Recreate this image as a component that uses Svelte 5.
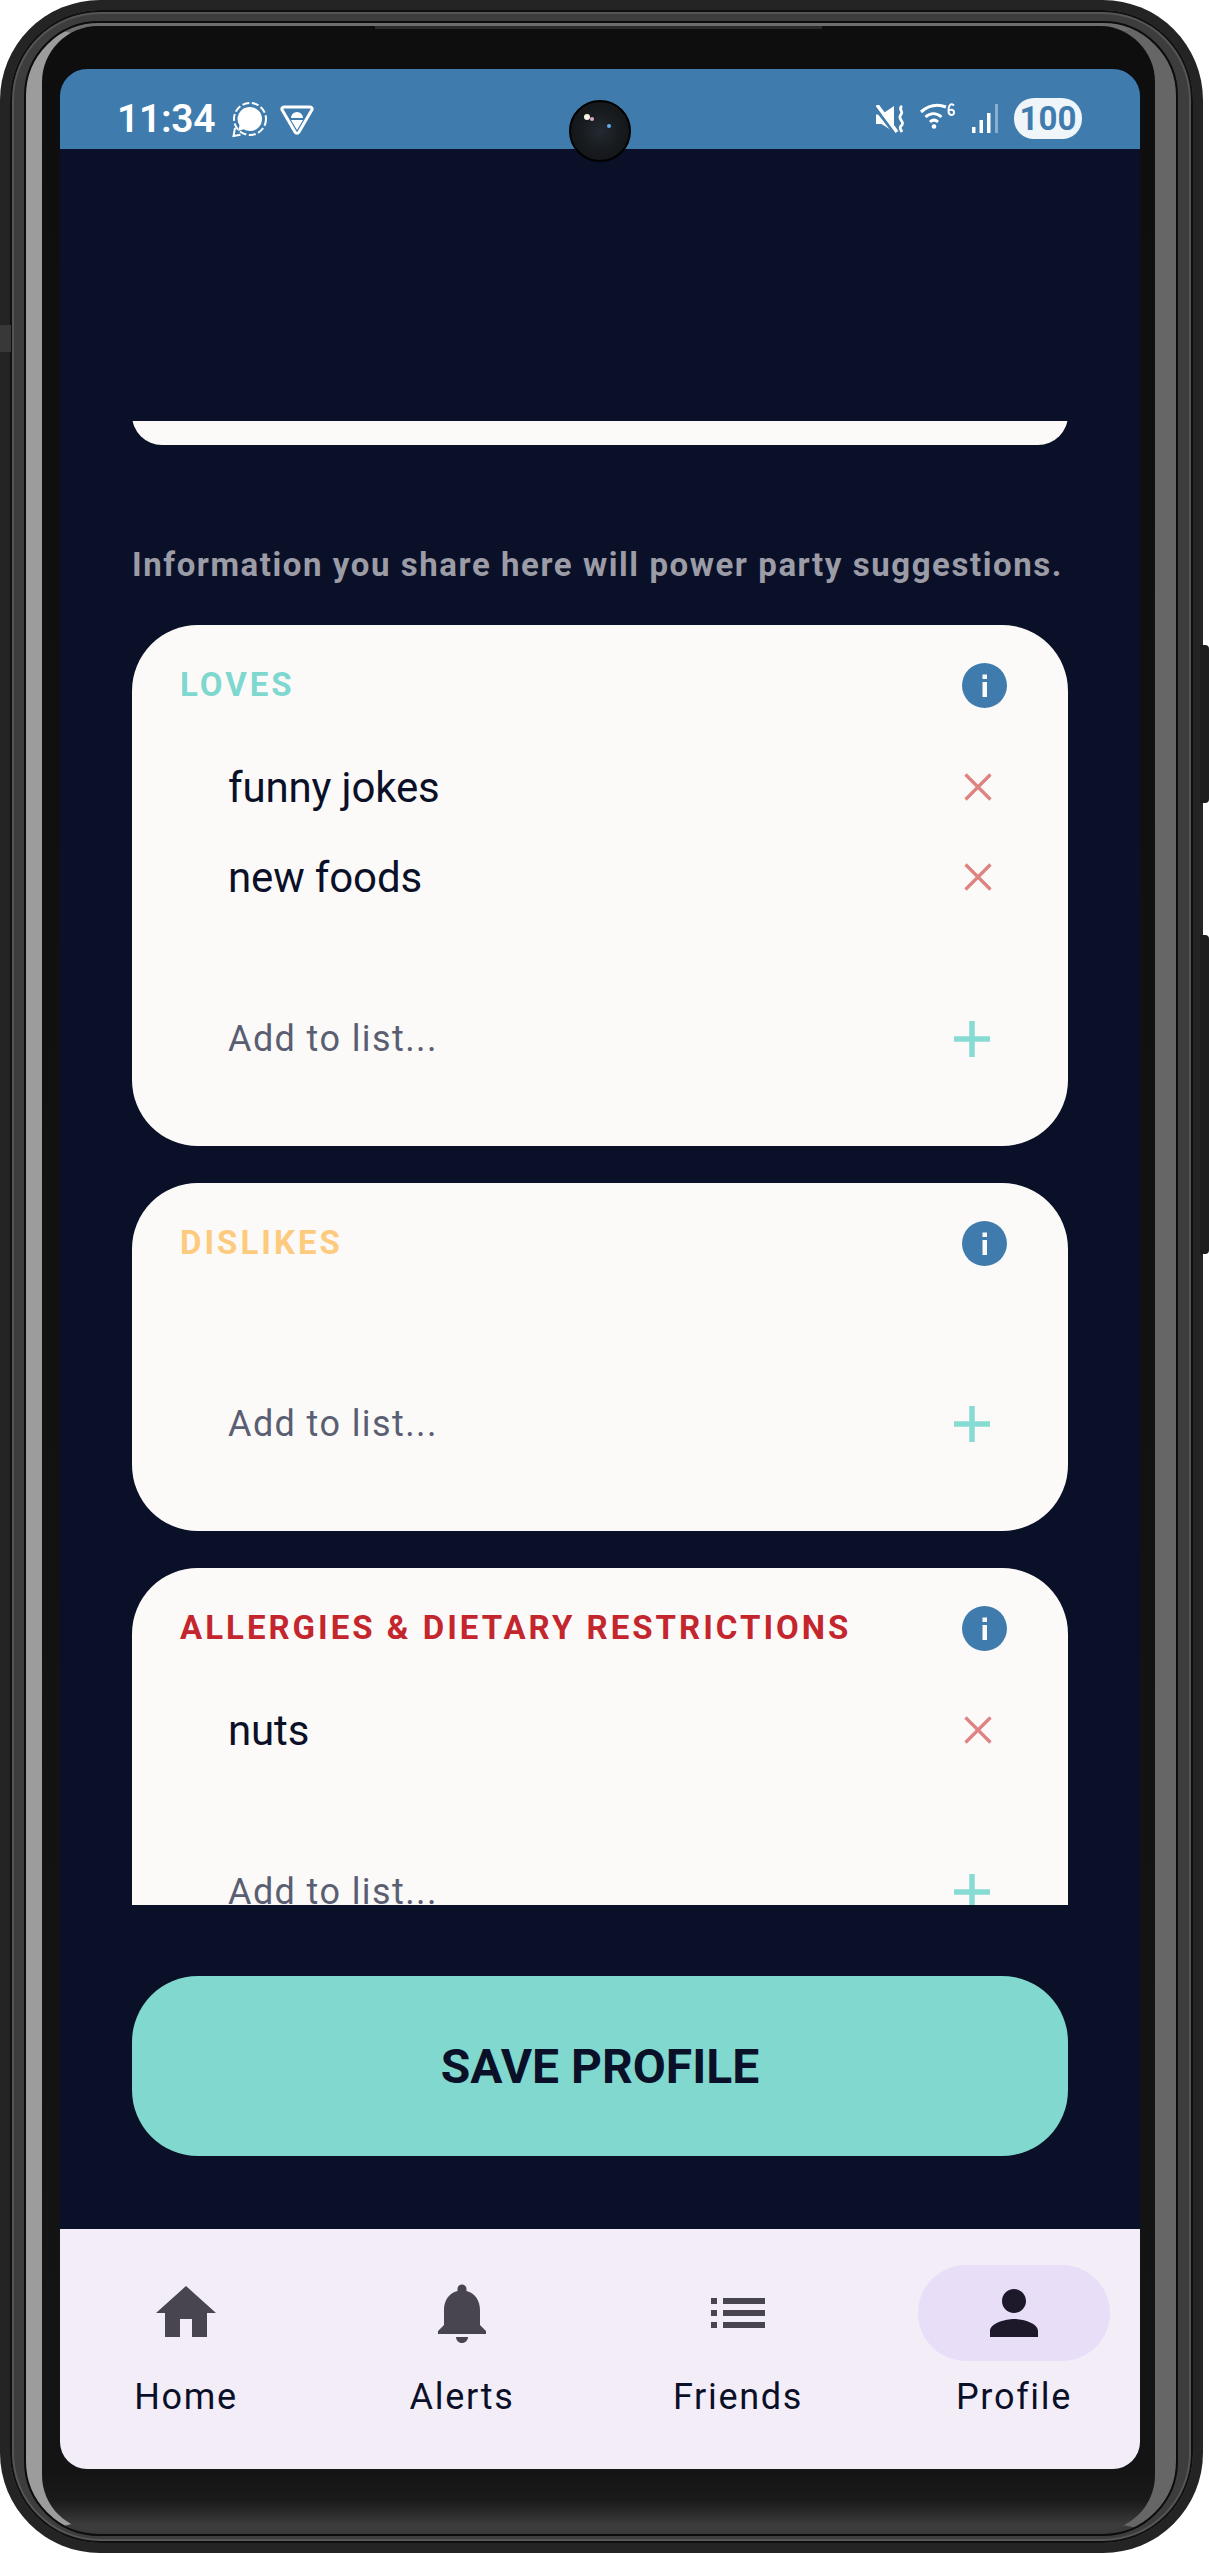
<script>
  const lists = [
    { title: 'LOVES', tone: 'loves', items: ['funny jokes', 'new foods'] },
    { title: 'DISLIKES', tone: 'dislikes', items: [] },
    { title: 'ALLERGIES & DIETARY RESTRICTIONS', tone: 'allergies', items: ['nuts'] },
  ];

  const tabs = [
    { label: 'Home', path: 'M10 20v-6h4v6h5v-8h3L12 3 2 12h3v8z' },
    { label: 'Alerts', path: 'M12 22c1.1 0 2-.9 2-2h-4c0 1.1.9 2 2 2zm6-6v-5c0-3.07-1.64-5.64-4.5-6.32V4c0-.83-.67-1.5-1.5-1.5s-1.5.67-1.5 1.5v.68C7.63 5.36 6 7.92 6 11v5l-2 2v1h16v-1l-2-2z' },
    { label: 'Friends', path: 'M3 13h2v-2H3v2zm0 4h2v-2H3v2zm0-8h2V7H3v2zm4 4h14v-2H7v2zm0 4h14v-2H7v2zM7 7v2h14V7H7z' },
    { label: 'Profile', path: 'M12 12c2.21 0 4-1.79 4-4s-1.79-4-4-4-4 1.79-4 4 1.79 4 4 4zm0 2c-2.67 0-8 1.34-8 4v2h16v-2c0-2.66-5.33-4-8-4z', active: true },
  ];
</script>

<div class="phone">
  <div class="button power"></div>
  <div class="button volume"></div>
  <div class="button left-key"></div>
  <div class="rim">
    <div class="band">
      <div class="glass">
        <div class="bezel">
          <div class="speaker"></div>
          <div class="screen">
            <header class="status">
              <div class="status-left">
                <span class="time">11:34</span>
                <svg class="ic-signal" viewBox="0 0 36 36" fill="none">
                  <circle cx="18" cy="17" r="16" stroke="#fff" stroke-width="2" stroke-dasharray="7 2.6" />
                  <path d="M18 5a12 12 0 0 1 0 24c-2.400 0-4.500-.6-6.300-1.700L6 29l1.500-5.600A12 12 0 0 1 18 5z" fill="#fff" />
                  <path d="M3 26l-1.500 8 7-1.200" stroke="#fff" stroke-width="2" />
                </svg>
                <svg class="ic-vpn" viewBox="0 0 34 30" fill="none">
                  <path d="M4 2h26c1.800 0 2.600 1.600 1.800 3L19 27c-1 1.600-3 1.600-4 0L2.200 5C1.400 3.600 2.200 2 4 2z" stroke="#fff" stroke-width="3" />
                  <path d="M11 13a6 6 0 0 1 12 0z" fill="#fff" />
                  <path d="M11 15h12l-6 10z" fill="#fff" />
                </svg>
              </div>
              <div class="status-right">
                <svg class="ic-mute" viewBox="0 0 28 28" fill="none">
                  <path d="M0 9.500h5.500L18 1v26L5.500 19H0z" fill="#fff" />
                  <path d="M-1 3l21 27" stroke="#3f7cad" stroke-width="3" />
                  <path d="M1 0l20 27" stroke="#fff" stroke-width="3.500" />
                  <path d="M26 1c-4 3 1 5-.5 7.500s-2.500 3.500-.5 6.500 2 4 0 6 0 4 1 6" stroke="#fff" stroke-width="2.800" />
                </svg>
                <svg class="ic-wifi" viewBox="0 0 36 26" fill="none">
                  <path d="M1 9c8-7 17-8 25-5M5.500 14c5-4.500 11-4.500 16 0M10 19c2.500-2.300 5.500-2.300 8 0" stroke="#fff" stroke-width="3" />
                  <circle cx="14" cy="23.500" r="2.300" fill="#fff" />
                  <path d="M34 2.500C31-.5 28.500 2 28.500 8c0 5 5.500 5 5.500 1.500S30 6 28.500 8" stroke="#fff" stroke-width="2" />
                </svg>
                <svg class="ic-bars" viewBox="0 0 27 29">
                  <rect x="0" y="23" width="3.500" height="6" fill="#fff" />
                  <rect x="7.500" y="16" width="3.500" height="13" fill="#fff" />
                  <rect x="15" y="9" width="3.500" height="20" fill="#fff" />
                  <rect x="23" y="0" width="3" height="29" fill="#fff" opacity="0.4" />
                </svg>
                <span class="battery">100</span>
              </div>
            </header>

            <main class="content">
              <div class="scroller">
                <div class="prev-card"></div>
                <p class="hint">Information you share here will power party suggestions.</p>

                {#each lists as list}
                  <section class="card">
                    <div class="card-head">
                      <h2 class={list.tone}>{list.title}</h2>
                      <svg class="ic-info" viewBox="0 0 45 45">
                        <circle cx="22.500" cy="22.500" r="22.500" fill="#3f7cad" />
                        <rect x="20.500" y="11.500" width="4.500" height="4.500" fill="#fcfaf8" />
                        <rect x="20.500" y="19" width="4.500" height="15" fill="#fcfaf8" />
                      </svg>
                    </div>
                    <ul>
                      {#each list.items as item}
                        <li>
                          <span>{item}</span>
                          <svg class="ic-x" viewBox="0 0 28 28">
                            <path d="M1.500 1.500l25 25M26.500 1.500l-25 25" stroke="#de8282" stroke-width="3.200" fill="none" />
                          </svg>
                        </li>
                      {/each}
                    </ul>
                    <div class="add-row">
                      <span>Add to list...</span>
                      <svg class="ic-plus" viewBox="0 0 36 36">
                        <path d="M18 0v36M0 18h36" stroke="#86dcd3" stroke-width="5.500" fill="none" />
                      </svg>
                    </div>
                  </section>
                {/each}
              </div>

              <button class="save">SAVE PROFILE</button>
            </main>

            <nav class="tabs">
              {#each tabs as tab}
                <div class="tab" class:active={tab.active}>
                  <div class="pill">
                    <svg viewBox="0 0 24 24" width="72" height="72"><path d={tab.path} /></svg>
                  </div>
                  <span>{tab.label}</span>
                </div>
              {/each}
            </nav>
          </div>
          <div class="camera">
            <i class="glint white"></i>
            <i class="glint pink"></i>
            <i class="glint blue"></i>
          </div>
        </div>
      </div>
    </div>
  </div>
</div>

<style>
  :global(body) {
    margin: 0;
    background: #fff;
    font-family: Roboto, 'Liberation Sans', sans-serif;
  }

  .phone {
    position: relative;
    width: 1203px;
    height: 2553px;
  }

  .button {
    position: absolute;
    left: 1200px;
    width: 9px;
    background: #1d1d1d;
    border-radius: 0 4px 4px 0;
  }

  .power {
    top: 645px;
    height: 158px;
  }

  .volume {
    top: 935px;
    height: 319px;
  }

  /* small key mark on the left edge, lies over the rim */
  .left-key {
    left: 0;
    top: 325px;
    width: 11px;
    height: 27px;
    background: #383838;
    border-radius: 0;
    z-index: 1;
  }

  .rim {
    height: 100%;
    box-sizing: border-box;
    padding: 10px;
    border-radius: 100px;
    background: #242424;
  }

  .band {
    height: 100%;
    box-sizing: border-box;
    padding: 12px 16px 8px 15px;
    border-radius: 90px;
    background: #3d3d3d;
    box-shadow: inset 0 0 0 2px #101010, inset 0 0 0 4px #555;
  }

  .glass {
    height: 100%;
    box-sizing: border-box;
    border-style: solid;
    border-width: 4px 22px 4px 17px;
    border-color: #6d6d6d #666 #3a3a3a #9c9c9c;
    border-radius: 74px;
    outline: 2px solid #0c0c0c;
    outline-offset: -1px;
  }

  .bezel {
    position: relative;
    height: 100%;
    box-sizing: border-box;
    padding: 43px 15px 62px 18px;
    border-radius: 56px;
    background: linear-gradient(180deg, #0e0e0e 0, #141414 calc(100% - 62px), #1a1a1a calc(100% - 30px), #3c3c3c calc(100% - 6px));
  }

  .speaker {
    position: absolute;
    left: 333px;
    top: 0;
    width: 447px;
    height: 3px;
    background: #2a2a2a;
  }

  .screen {
    height: 2400px;
    display: flex;
    flex-direction: column;
    background: #0b1029;
    border-radius: 27px;
    overflow: hidden;
  }

  .camera {
    position: absolute;
    left: 527px;
    top: 74px;
    width: 62px;
    height: 62px;
    box-sizing: border-box;
    border: 2px solid #000;
    border-radius: 50%;
    background: radial-gradient(circle at 50% 50%, #232a30 0, #181c20 45%, #111 100%);
  }

  .glint {
    position: absolute;
    border-radius: 50%;
  }

  .white {
    left: 13px;
    top: 12px;
    width: 6px;
    height: 6px;
    background: #f4f6e8;
  }

  .pink {
    left: 19px;
    top: 15px;
    width: 4px;
    height: 4px;
    background: #e3a6c8;
  }

  .blue {
    left: 36px;
    top: 22px;
    width: 4px;
    height: 4px;
    background: #5fb0ea;
  }

  .status {
    height: 80px;
    flex: none;
    display: flex;
    justify-content: space-between;
    background: #3f7cad;
    color: #fff;
    padding: 29px 58px 0;
    box-sizing: border-box;
  }

  .status-left {
    display: flex;
    align-items: flex-start;
  }

  .time {
    font-size: 39px;
    font-weight: 600;
    line-height: 46px;
    letter-spacing: -0.3px;
    width: 115px;
    margin: -2px 0 0 -1px;
  }

  .ic-signal {
    width: 36px;
    height: 36px;
    margin: 4px 12px 0 0;
  }

  .ic-vpn {
    width: 34px;
    height: 30px;
    margin-top: 7px;
  }

  .status-right {
    display: flex;
    align-items: flex-start;
  }

  .ic-mute {
    width: 28px;
    height: 28px;
    margin: 7px 16px 0 0;
  }

  .ic-wifi {
    width: 36px;
    height: 26px;
    margin: 5px 16px 0 0;
  }

  .ic-bars {
    width: 27px;
    height: 29px;
    margin: 6px 15px 0 0;
  }

  .battery {
    width: 68px;
    height: 41px;
    border-radius: 20px;
    background: #f0f5f9;
    color: #3f7cad;
    font-size: 33px;
    font-weight: 700;
    line-height: 41px;
    text-align: center;
  }

  .content {
    flex: 1;
    min-height: 0;
    padding: 272px 72px 0;
  }

  .scroller {
    height: 1484px;
    overflow: hidden;
  }

  .prev-card {
    height: 60px;
    margin-top: -36px;
    background: #fcfaf8;
    border-radius: 36px;
  }

  .hint {
    margin: 99px 0 0;
    font-size: 33px;
    line-height: 42px;
    font-weight: 700;
    letter-spacing: 1.56px;
    color: #9b9ca6;
    white-space: nowrap;
  }

  .card {
    margin: 0 0 37px;
    padding: 30px 61px 62px 48px;
    background: #fcfaf8;
    border-radius: 66px;
  }

  .hint + .card {
    margin-top: 39px;
  }

  .card-head {
    height: 60px;
    display: flex;
    align-items: center;
    justify-content: space-between;
  }

  h2 {
    margin: 0;
    font-size: 33px;
    font-weight: 700;
    letter-spacing: 3px;
    line-height: 40px;
  }

  .loves {
    color: #7fd8cf;
  }

  .dislikes {
    color: #fdcb7e;
  }

  .allergies {
    color: #c4262e;
  }

  .ic-info {
    width: 45px;
    height: 45px;
  }

  ul {
    list-style: none;
    margin: 27px 0 0;
    padding: 0;
    min-height: 7px;
  }

  li {
    height: 90px;
    display: flex;
    align-items: center;
    justify-content: space-between;
    padding: 0 15px 0 48px;
    font-size: 42px;
    letter-spacing: -0.15px;
    color: #0b1029;
  }

  .ic-x {
    width: 28px;
    height: 28px;
  }

  .add-row {
    height: 90px;
    margin-top: 72px;
    display: flex;
    align-items: center;
    justify-content: space-between;
    padding: 0 17px 0 48px;
    font-size: 36px;
    letter-spacing: 1.4px;
    color: #5a5e72;
  }

  .ic-plus {
    width: 36px;
    height: 36px;
  }

  .save {
    display: block;
    width: 100%;
    height: 180px;
    margin-top: 71px;
    border: 0;
    border-radius: 66px;
    background: #80d8cf;
    color: #0b1029;
    font-family: Roboto, 'Liberation Sans', sans-serif;
    font-size: 48px;
    font-weight: 700;
  }

  .tabs {
    height: 240px;
    flex: none;
    display: flex;
    justify-content: space-between;
    padding: 36px 30px 0;
    box-sizing: border-box;
    background: #f3edf7;
  }

  .tab {
    width: 192px;
    display: flex;
    flex-direction: column;
    align-items: center;
    font-size: 36px;
    font-weight: 450;
    letter-spacing: 1.7px;
    color: #0b1029;
  }

  .pill {
    width: 192px;
    height: 96px;
    display: flex;
    align-items: center;
    justify-content: center;
    border-radius: 48px;
    margin-bottom: 15px;
  }

  .pill svg {
    fill: #49454f;
  }

  .tab.active .pill {
    background: #e8def8;
  }

  .tab.active .pill svg {
    fill: #1d192b;
  }
</style>
